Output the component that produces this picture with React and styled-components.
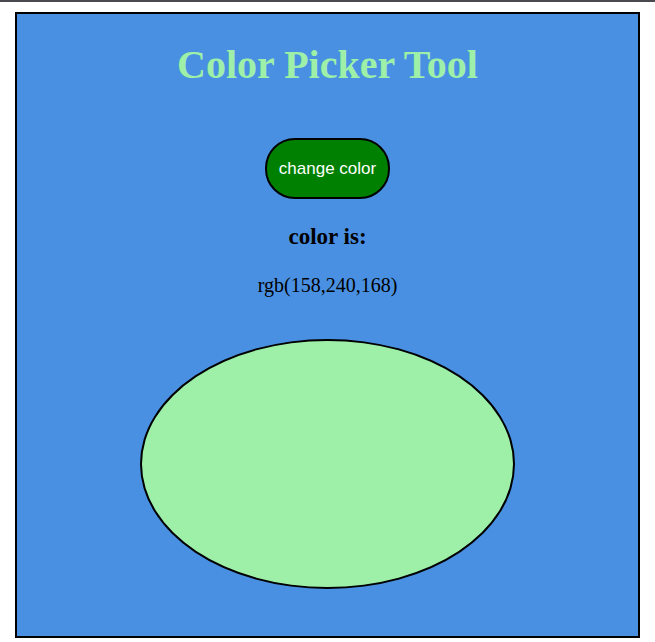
import React, { useState } from 'react';
import styled, { createGlobalStyle } from 'styled-components';

const GlobalStyle = createGlobalStyle`
    html, body {
        margin: 0;
        padding: 0;
        background: #ffffff;
    }
`;

const TopBar = styled.div`
    height: 2px;
    background: #4b4950;
`;

const Frame = styled.div`
    box-sizing: border-box;
    width: 625px;
    height: 626px;
    margin: 10px 0 0 15px;
    border: 2px solid #000;
    background: #4a90e2;
    display: flex;
    flex-direction: column;
    align-items: center;
    font-family: "Liberation Serif", "Times New Roman", serif;
`;

const Title = styled.h1`
    margin: 28px 0 0;
    font-size: 40px;
    font-weight: bold;
    line-height: 46px;
    color: ${props => props.color};
`;

const ChangeButton = styled.button`
    box-sizing: border-box;
    margin-top: 50px;
    width: 125px;
    height: 61px;
    border: 2px solid #000;
    border-radius: 30px;
    background: #008000;
    color: #fff;
    font-family: "Liberation Sans", Arial, sans-serif;
    font-size: 17px;
    padding: 0;
    cursor: pointer;
`;

const Label = styled.h3`
    margin: 24px 0 0;
    font-size: 23px;
    line-height: 27px;
    font-weight: bold;
    color: #000;
`;

const Value = styled.p`
    margin: 24px 0 0;
    font-size: 20px;
    line-height: 23px;
    color: #000;
`;

const Ellipse = styled.div`
    box-sizing: border-box;
    margin-top: 42px;
    width: 375px;
    height: 250px;
    border: 2px solid #000;
    border-radius: 50%;
    background: ${props => props.color};
`;

const randomColor = () => {
    const c = () => Math.floor(Math.random() * 256);
    return `rgb(${c()},${c()},${c()})`;
};

const App = () => {
    const [color, setColor] = useState('rgb(158,240,168)');

    return (
        <>
            <GlobalStyle />
            <TopBar />
            <Frame>
                <Title color={color}>Color Picker Tool</Title>
                <ChangeButton onClick={() => setColor(randomColor())}>change color</ChangeButton>
                <Label>color is:</Label>
                <Value>{color}</Value>
                <Ellipse color={color} />
            </Frame>
        </>
    );
};

export default App;
